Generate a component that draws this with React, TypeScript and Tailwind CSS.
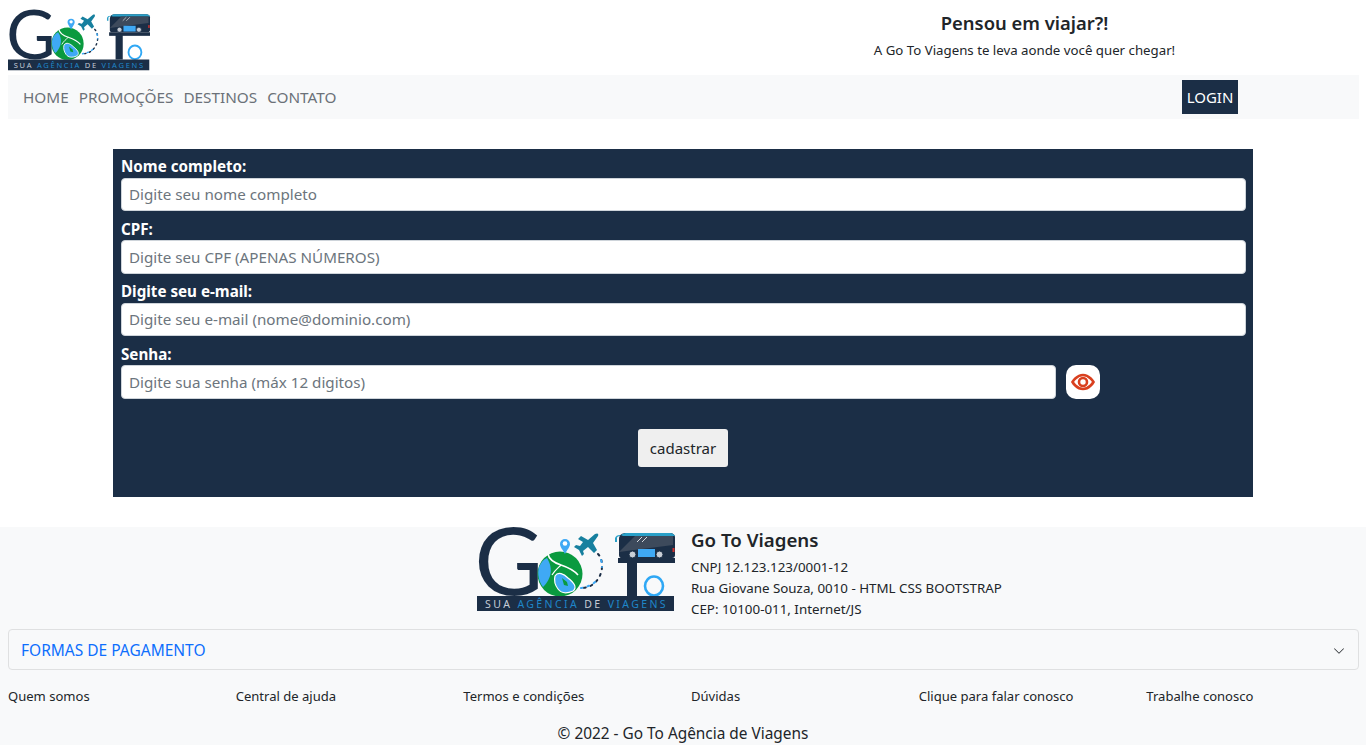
function Logo({ className }: { className: string }) {
  return (
    <svg viewBox="0 0 198 85" className={`${className} overflow-visible`}>
      <text x="-2.5" y="68" fontSize="94" fontFamily="Lato, sans-serif" fill="#1b2e46">G</text>
      <circle cx="83" cy="47" r="22.5" fill="#0a9a3f" />
      <path d="M62 40C64 35 67 32 70 31 73 36 75 42 73 49 71 55 68 58 66 60 62 55 60 47 62 40z" fill="#3fa9f5" />
      <path d="M78 49C81 44 87 47 91 51 96 55 101 60 96 64 89 67 84 66 81 62 78 58 77 53 78 49z" fill="#3fa9f5" stroke="#ffffff" strokeWidth="1.2" />
      <path d="M85 51l5 4 1 4-4-1z" fill="#0a9a3f" />
      <path d="M71 27C72 33 78 36 84 38 90 40 96 42 101 48" stroke="#ffffff" strokeWidth="1.6" fill="none" />
      <path d="M75 48C78 43 81 41 84 38" stroke="#ffffff" strokeWidth="1.2" fill="none" />
      <path d="M88 27c-2-4-5-7-5-10a5 5 0 0 1 10 0c0 3-3 6-5 10z" fill="#3fa9f5" />
      <circle cx="88" cy="16.500" r="2.300" fill="#ffffff" />
      <path d="M101 12l3-3 7 4 7-6c2-1 4-1 3 2l-5 7 4 7-3 3-6-6-5 4 1 3-2 2-3-6-5-3 2-2 4 1 3-4z" fill="#17809f" />
      <path d="M121 27c3 3 4 7 4 12 0 8-4 15-10 19-3 2-7 3-12 3" stroke="#1b2e46" strokeWidth="2" strokeDasharray="2 5" fill="none" strokeLinecap="round" />
      <path d="M124 33c1 3 1 5 1 7M118 55c-3 3-8 5-14 6" stroke="#3fa9f5" strokeWidth="2" strokeDasharray="2 5" fill="none" strokeLinecap="round" />
      <path d="M142 12c0-4 3-6 7-6h44c3 0 5 2 5 4v18c0 2-1 3-3 3h-51c-1 0-2-1-2-3z" fill="#1b2e46" />
      <path d="M144 8c1-1 3-2 5-2h44c2 0 4 1 5 3h-49c-2 0-4 0-5-1z" fill="#2aa0c8" />
      <path d="M142 25l16-16h38v9z" fill="#3d4a5c" />
      <path d="M160 15l5-5M165 15l5-5" stroke="#ffffff" strokeWidth="0.8" />
      <rect x="161" y="22" width="17" height="8" fill="#3fa9f5" />
      <path d="M138 11c1-2 2-3 5-3v1c-2 0-3 1-3 2v4h-2z" fill="#2aa0c8" />
      <rect x="195.500" y="21" width="2" height="4" fill="#d0312d" />
      <circle cx="155.500" cy="27.500" r="3.500" fill="#c9ced6" stroke="#1b2e46" />
      <circle cx="182.500" cy="27.500" r="3.500" fill="#c9ced6" stroke="#1b2e46" />
      <rect x="141" y="31" width="57" height="5" fill="#1b2e46" />
      <rect x="150" y="35" width="10" height="34" fill="#1b2e46" />
      <ellipse cx="177" cy="59" rx="9" ry="9.500" fill="none" stroke="#2fa8f5" strokeWidth="2.600" />
      <rect x="0" y="69" width="197" height="15" fill="#1b2e46" />
      <text x="8" y="81" fontSize="10.5" letterSpacing="2.4" fontFamily='"Noto Sans", sans-serif' fill="#c5ccd6">
        SUA <tspan fill="#1f86c9">AGÊNCIA</tspan> DE <tspan fill="#1f86c9">VIAGENS</tspan>
      </text>
    </svg>
  );
}

function Field({ label, placeholder }: { label: string; placeholder: string }) {
  return (
    <div>
      <label className="block font-bold text-white text-[15.2px] leading-[22.5px]">{label}</label>
      <input
        placeholder={placeholder}
        className="block w-[1125px] h-[33.5px] px-[7px] bg-white border border-[#ced4da] rounded-[4px] text-[15.2px] placeholder:text-[#6c757d] outline-none"
      />
    </div>
  );
}

export default function App() {
  return (
    <div className="w-[1366px] h-[755px] overflow-hidden bg-white text-[#212529] flex flex-col font-['Noto_Sans',sans-serif]">
      <header className="flex h-[75px]">
        <div className="w-[683px] pl-2 pt-[10px]">
          <Logo className="w-[142px] h-[61px]" />
        </div>
        <div className="w-[683px] text-center pt-[10px]">
          <h1 className="text-[18.4px] font-semibold leading-[26px]">Pensou em viajar?!</h1>
          <p className="text-[13.25px] leading-[20px] mt-[4px]">A Go To Viagens te leva aonde você quer chegar!</p>
        </div>
      </header>

      <nav className="ml-2 w-[1351px] h-[44px] bg-[#f8f9fa] flex items-center text-[15.3px] text-[#6b7178]">
        <a className="ml-[15px]">HOME</a>
        <a className="ml-[10px]">PROMOÇÕES</a>
        <a className="ml-[10px]">DESTINOS</a>
        <a className="ml-[10px]">CONTATO</a>
        <a className="ml-auto mr-[121px] w-[56px] h-[34px] bg-[#1b2e46] text-white text-[15px] flex items-center justify-center">LOGIN</a>
      </nav>

      <form className="mt-[30px] mx-auto w-[1140px] h-[348px] bg-[#1b2e46] px-2 pt-[6px] flex flex-col gap-[6.5px]">
        <Field label="Nome completo:" placeholder="Digite seu nome completo" />
        <Field label="CPF:" placeholder="Digite seu CPF (APENAS NÚMEROS)" />
        <Field label="Digite seu e-mail:" placeholder="Digite seu e-mail (nome@dominio.com)" />
        <div>
          <label className="block font-bold text-white text-[15.2px] leading-[22.5px]">Senha:</label>
          <div className="flex items-center gap-[10px]">
            <input
              placeholder="Digite sua senha (máx 12 digitos)"
              className="block w-[935px] h-[33.5px] px-[7px] bg-white border border-[#ced4da] rounded-[4px] text-[15.2px] placeholder:text-[#6c757d] outline-none"
            />
            <span className="w-[34px] h-[33.5px] bg-white rounded-[10px] flex items-center justify-center">
              <svg width="24" height="24" viewBox="0 0 24 24" fill="none" stroke="#d9401f" strokeWidth="2.600">
                <path d="M1.500 12S5.500 5 12 5 22.500 12 22.500 12 18.500 19 12 19 1.500 12 1.500 12z" />
                <circle cx="12" cy="12" r="4" />
              </svg>
            </span>
          </div>
        </div>
        <button type="button" className="mx-auto mt-6 w-[90px] h-[38px] bg-[#efefef] rounded-[3px] text-[15px] text-[#212529]">cadastrar</button>
      </form>

      <footer className="mt-[30px] bg-[#f8f9fa] h-[218px]">
        <div className="grid grid-cols-2">
          <div className="flex justify-end pr-2">
            <Logo className="w-[198px] h-[85px]" />
          </div>
          <div className="pl-2">
            <h2 className="text-[18.7px] font-semibold leading-[26px]">Go To Viagens</h2>
            <p className="text-[13.35px] leading-[21px] mt-[4px]">CNPJ 12.123.123/0001-12</p>
            <p className="text-[13.35px] leading-[21px]">Rua Giovane Souza, 0010 - HTML CSS BOOTSTRAP</p>
            <p className="text-[13.35px] leading-[21px]">CEP: 10100-011, Internet/JS</p>
          </div>
        </div>
        <div className="ml-2 w-[1351px] mt-[9px] h-[41px] pt-[2px] border border-[#dfe0e1] rounded-[4px] flex items-center justify-between pl-3 pr-[13px] text-[15.5px] text-[#0d6efd]">
          <span>FORMAS DE PAGAMENTO</span>
          <svg width="12" height="12" viewBox="0 0 16 16" fill="#212529">
            <path fillRule="evenodd" d="M1.646 4.646a.5.5 0 0 1 .708 0L8 10.293l5.646-5.647a.5.5 0 0 1 .708.708l-6 6a.5.5 0 0 1-.708 0l-6-6a.5.5 0 0 1 0-.708z" />
          </svg>
        </div>
        <div className="grid grid-cols-6 mt-[16px] text-[13.05px] leading-[20px]">
          {["Quem somos", "Central de ajuda", "Termos e condições", "Dúvidas", "Clique para falar conosco", "Trabalhe conosco"].map((t) => (
            <a key={t} className="pl-2">{t}</a>
          ))}
        </div>
        <p className="text-center text-[15.4px] leading-[22px] mt-[17px]">© 2022 - Go To Agência de Viagens</p>
      </footer>
    </div>
  );
}
